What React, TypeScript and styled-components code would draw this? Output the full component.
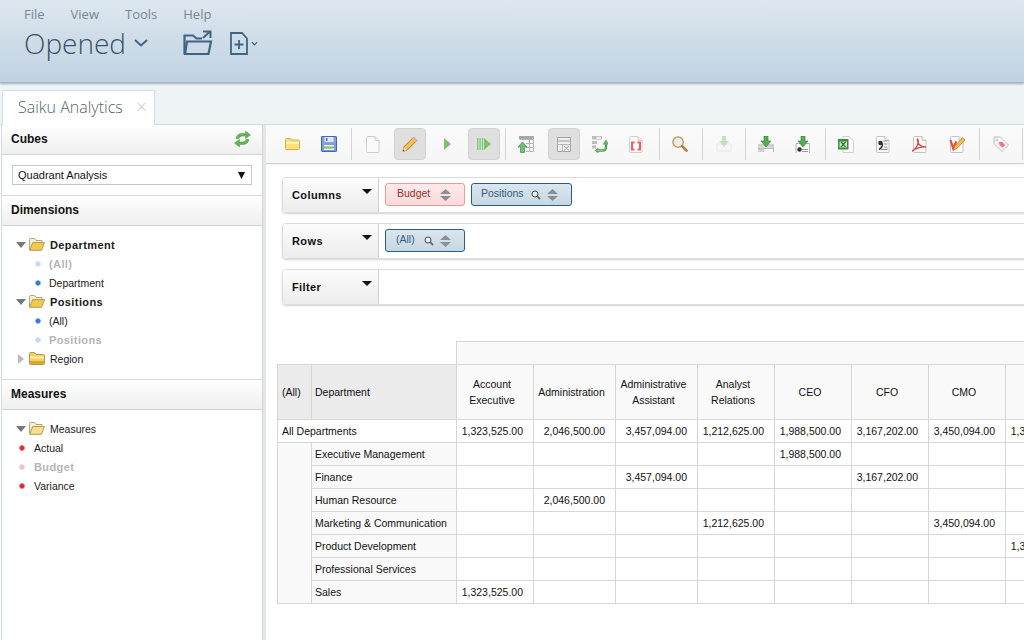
import React from 'react';
import styled, { createGlobalStyle } from 'styled-components';

const GlobalStyle = createGlobalStyle`
  html, body { margin: 0; padding: 0; background: #fff; }
  body { font-family: "Liberation Sans", Arial, sans-serif; font-size: 11px; color: #222; }
`;

const Page = styled.div`
  width: 1024px;
  height: 640px;
  overflow: hidden;
  display: flex;
  flex-direction: column;
`;

const Header = styled.header`
  height: 83px;
  flex: none;
  box-sizing: border-box;
  padding: 5px 0 0 24px;
  background: linear-gradient(to bottom, #dde7ef, #c0d2e2);
  border-bottom: 1px solid #a9b5bf;
  box-shadow: 0 1px 2px rgba(90, 110, 125, 0.5);
  position: relative;
  z-index: 2;
`;

const MenuBar = styled.nav`
  display: flex;
  gap: 26px;
  font: 13px/18px "Open Sans", sans-serif;
  color: #7b8791;
`;

const HeaderTools = styled.div`
  display: flex;
  align-items: center;
  height: 40px;
`;

const Perspective = styled.div`
  font: 300 28px/40px "Open Sans", sans-serif;
  color: #3b5266;
  width: 110px;
`;

const HeaderIcon = styled.svg<{ $ml: number }>`
  margin-left: ${({ $ml }) => $ml}px;
  flex: none;
  overflow: visible;
`;

const TabBar = styled.div`
  height: 42px;
  flex: none;
  box-sizing: border-box;
  padding: 7px 0 0 2px;
  background: #eef3f6;
  border-bottom: 1px solid #cfdbe3;
  display: flex;
  align-items: flex-end;
`;

const Tab = styled.div`
  width: 153px;
  height: 35px;
  box-sizing: border-box;
  margin-bottom: -1px;
  background: #fff;
  border: 1px solid #d3e0e8;
  border-bottom: none;
  padding: 0 0 2px 15px;
  display: flex;
  align-items: center;
  font: 300 16px "Open Sans", sans-serif;
  color: #56646f;
`;

const TabClose = styled.span`
  margin-left: 13px;
  font: 300 20px/20px "Open Sans", sans-serif;
  color: #c3d0d9;
`;

const Body = styled.div`
  flex: 1;
  min-height: 0;
  display: flex;
`;

const SidePanel = styled.aside`
  width: 260px;
  margin-left: 1px;
  flex: none;
  box-sizing: content-box;
  border-left: 1px solid #d3dbe0;
  border-right: 1px solid #cfd6db;
`;

const Splitter = styled.div`
  width: 3px;
  flex: none;
  background: #e6e6e6;
`;

const SectionHeader = styled.div`
  height: 30px;
  box-sizing: border-box;
  padding: 0 11px 2px 9px;
  display: flex;
  align-items: center;
  justify-content: space-between;
  font-weight: bold;
  font-size: 12px;
  color: #111;
  background: linear-gradient(to bottom, #fff, #efefef);
  border-bottom: 1px solid #d0d5d9;
`;

const SectionBody = styled.div`
  border-bottom: 1px solid #d3dbe0;
`;

const CubeArea = styled(SectionBody)`
  height: 41px;
  box-sizing: border-box;
  padding: 10px 10px 0 10px;
`;

const CubeSelect = styled.div`
  height: 20px;
  box-sizing: border-box;
  border: 1px solid #c8c8c8;
  padding: 0 6px 0 5px;
  display: flex;
  align-items: center;
  justify-content: space-between;
  color: #111;
`;

const Tree = styled.ul<{ $h: number }>`
  list-style: none;
  margin: 0;
  padding: 9px 0 0 0;
  height: ${({ $h }) => $h}px;
  box-sizing: border-box;
`;

const TreeRow = styled.li<{ $indent: number; $bold?: boolean; $muted?: boolean }>`
  height: 19px;
  display: flex;
  align-items: center;
  padding-left: ${({ $indent }) => $indent}px;
  font-size: ${({ $bold, $muted }) => ($bold || $muted ? '11px' : '10.5px')};
  font-weight: ${({ $bold, $muted }) => ($bold || $muted ? 'bold' : 'normal')};
  color: ${({ $muted }) => ($muted ? '#b5b5b5' : '#1a1a1a')};
  letter-spacing: ${({ $bold, $muted }) => ($bold || $muted ? '0.4px' : '0')};
`;

const Arrow = styled.span<{ $open: boolean }>`
  width: 0;
  height: 0;
  margin-right: ${({ $open }) => ($open ? 3 : 5)}px;
  border-style: solid;
  ${({ $open }) =>
    $open
      ? 'border-width: 6px 5px 0 5px; border-color: #777 transparent transparent transparent;'
      : 'margin-left: 2px; border-width: 5px 0 5px 6px; border-color: transparent transparent transparent #bbb;'}
`;

const Dot = styled.span<{ $tone: 'blue' | 'red'; $faded?: boolean; $gap: number }>`
  width: 6px;
  height: 6px;
  flex: none;
  border-radius: 50%;
  margin-right: ${({ $gap }) => $gap}px;
  opacity: ${({ $faded }) => ($faded ? 0.3 : 1)};
  background: ${({ $tone }) =>
    $tone === 'blue'
      ? 'radial-gradient(closest-side, #2f78dc 55%, #86b2ea 85%, #c2d7f2 100%)'
      : 'radial-gradient(closest-side, #dd2b35 55%, #e8797f 85%, #f0b8bb 100%)'};
`;

const Main = styled.main`
  flex: 1;
  min-width: 0;
  overflow: hidden;
`;

const Toolbar = styled.div`
  height: 39px;
  box-sizing: border-box;
  padding: 3px 0 0 5px;
  display: flex;
  background: linear-gradient(to bottom, #fbfbfb, #f6f6f6);
  border-bottom: 1px solid #cfcfcf;
  box-shadow: 0 1px 2px rgba(0, 0, 0, 0.06);
  white-space: nowrap;
`;

const ToolGroup = styled.div<{ $first?: boolean }>`
  height: 32px;
  flex: none;
  display: flex;
  gap: 5px;
  padding: 0 ${({ $first }) => ($first ? 6 : 5)}px 0 5px;
  border-right: 1px solid #d4d4d4;
`;

const ToolButton = styled.div<{ $active?: boolean; $faded?: boolean; $nudge?: number }>`
  width: 32px;
  height: 32px;
  flex: none;
  box-sizing: border-box;
  display: flex;
  align-items: center;
  justify-content: center;
  border-radius: 4px;
  background: ${({ $active }) => ($active ? '#dfdfdf' : 'transparent')};
  border: 1px solid ${({ $active }) => ($active ? '#d2d2d2' : 'transparent')};
  & > svg {
    opacity: ${({ $faded }) => ($faded ? 0.35 : 1)};
    margin-right: ${({ $nudge }) => ($nudge ?? 0) * 2}px;
  }
`;

const Fields = styled.section`
  padding: 13px 0 0 16px;
  display: flex;
  flex-direction: column;
  gap: 10px;
`;

const FieldRow = styled.div`
  height: 36px;
  box-sizing: border-box;
  width: 800px;
  display: flex;
  border: 1px solid #dcdcdc;
  border-radius: 4px 0 0 4px;
  box-shadow: 0 1px 2px rgba(0, 0, 0, 0.18);
`;

const FieldLabel = styled.div`
  width: 96px;
  flex: none;
  box-sizing: border-box;
  position: relative;
  padding-left: 9px;
  display: flex;
  align-items: center;
  font-weight: bold;
  letter-spacing: 0.4px;
  color: #111;
  border-right: 1px solid #cfcfcf;
  background: linear-gradient(to bottom, #fdfdfd, #ececec);
  border-radius: 4px 0 0 4px;
`;

const FieldCaret = styled.span`
  position: absolute;
  right: 6px;
  top: 11px;
  width: 0;
  height: 0;
  border-style: solid;
  border-width: 5px 5px 0 5px;
  border-color: #111 transparent transparent transparent;
`;

const PillList = styled.div`
  display: flex;
  gap: 6px;
  padding: 5px 0 0 6px;
`;

const Pill = styled.div<{ $tone: 'red' | 'blue'; $w: number; $pad: number }>`
  width: ${({ $w }) => $w}px;
  height: 23px;
  box-sizing: border-box;
  padding: 0 13px 3px ${({ $pad }) => $pad}px;
  display: flex;
  align-items: center;
  border-radius: 3px;
  font-size: 10.5px;
  border: 1px solid ${({ $tone }) => ($tone === 'red' ? '#ee9a9a' : '#2c5c82')};
  color: ${({ $tone }) => ($tone === 'red' ? '#a02c2c' : '#2f5d80')};
  background: ${({ $tone }) =>
    $tone === 'red'
      ? 'linear-gradient(to bottom, #fdeaea, #fbdada)'
      : 'linear-gradient(to bottom, #dbe6ee, #c6d7e4)'};
`;

const PillIcons = styled.span`
  display: flex;
  align-items: center;
  gap: 6px;
  margin: 3px 0 0 auto;
`;

const TableWrap = styled.div`
  margin: 36px 0 0 11px;
`;

const Pivot = styled.table`
  border-collapse: collapse;
  table-layout: fixed;
  width: 805px;
  font-size: 10.5px;
  color: #111;
  & td, & th {
    font-weight: normal;
    border: 1px solid #d6d6d6;
    box-sizing: border-box;
    padding: 0;
    height: 23px;
    white-space: nowrap;
    overflow: hidden;
  }
`;

const BlankCell = styled.th`
  && { border: none; border-bottom: 1px solid #d6d6d6; }
`;

const ColumnSpacer = styled.th`
  && { background: #f9f9f9; }
`;

const AxisHead = styled.th<{ $pad: number }>`
  && {
    height: 55px;
    background: #ebebeb;
    text-align: left;
    padding-left: ${({ $pad }) => $pad}px;
  }
`;

const ColumnHead = styled.th`
  && {
    height: 55px;
    background: #f9f9f9;
    text-align: center;
    line-height: 16px;
    white-space: normal;
    padding-right: 6px;
  }
`;

const RowHead = styled.th<{ $pad: number; $plain?: boolean }>`
  && {
    text-align: left;
    padding-left: ${({ $pad }) => $pad}px;
    background: ${({ $plain }) => ($plain ? '#fff' : '#f9f9f9')};
  }
`;

const Cell = styled.td`
  && {
    text-align: right;
    padding-right: 10px;
    background: #fff;
  }
`;

const FolderClosed = () => (
  <svg width="16" height="13" viewBox="0 0 16 13" style={{ marginRight: 5 }}>
    <path d="M.5 11.500v-10q0-1 1-1h4l1.500 2h7.500q1 0 1 1v8q0 1-1 1h-13q-1 0-1-1z" fill="#f3cf5c" stroke="#b3985a" />
    <path d="M1 4.500h14v2H1z" fill="#fdf0b4" />
    <path d="M1 9h14v3H1z" fill="#d9a832" />
  </svg>
);

const FolderOpen = ({ pale }: { pale?: boolean }) => (
  <svg width="16" height="13" viewBox="0 0 16 13" style={{ marginRight: 5 }}>
    <path d="M.5 12V1.500q0-1 1-1h4l1.500 2h6v2" fill="#f7f0d3" stroke="#b3a67c" />
    <path d="M.8 12.300 3.600 4.600h11.900l-3 7.700z" fill={pale ? '#f7df8e' : '#f2c94c'} stroke="#b09a5a" />
  </svg>
);

const MagnifierSmall = () => (
  <svg width="10" height="10" viewBox="0 0 10 10">
    <circle cx="4" cy="4" r="3" fill="#e8eef2" stroke="#444" />
    <path d="M6.200 6.200 9 9" stroke="#666" strokeWidth="1.800" />
  </svg>
);

const SortArrows = () => (
  <svg width="11" height="12" viewBox="0 0 11 12">
    <path d="M5.500 0l5.500 5H0zM5.500 12l5.500-5H0z" fill="#8a8f93" />
  </svg>
);

const DocBase = ({ children, stroke = '#c4c4c4' }: { children?: React.ReactNode; stroke?: string }) => (
  <svg width="16" height="17" viewBox="0 0 16 17">
    <path d="M2.500.5h7.500l4 4v11q0 1-1 1h-10.500q-1 0-1-1v-14q0-1 1-1z" fill="#fbfbfb" stroke={stroke} />
    <path d="M10 .5v4h4" fill="#eee" stroke={stroke} />
    {children}
  </svg>
);

const GridBase = ({ children }: { children?: React.ReactNode }) => (
  <svg width="16" height="17" viewBox="0 0 16 17">
    {children}
  </svg>
);

const icons = {
  folder: (
    <svg width="15" height="12" viewBox="0 0 15 12">
      <path d="M.5 10.500v-9q0-1 1-1h4l1 1.500h7q1 0 1 1v7.500q0 1-1 1h-12q-1 0-1-1z" fill="#fbe27f" stroke="#e5a73a" />
      <path d="M1 4h13v2H1z" fill="#fff3b8" />
    </svg>
  ),
  save: (
    <svg width="16" height="16" viewBox="0 0 16 16">
      <path d="M1 .5h14q.5 0 .5.5v14q0 .5-.5.5H1q-.5 0-.5-.5V1Q.5.5 1 .5z" fill="#7f9fdc" stroke="#3f68b5" />
      <path d="M3.500 1h9v5h-9z" fill="#dfe7f5" />
      <path d="M5 2h1.500v3H5z" fill="#4a6fb8" />
      <path d="M3 9h10v5H3z" fill="#eef3ea" />
      <path d="M3 10.500h10v2H3z" fill="#83bf63" />
    </svg>
  ),
  page: <DocBase stroke="#cdcdcd" />,
  pencil: (
    <svg width="16" height="16" viewBox="0 0 16 16">
      <path d="M11.500 1.200 14.800 4.500 5 14.300 1 15.200 1.800 11z" fill="#f6c14b" stroke="#b0762a" />
      <path d="M11.500 1.200 14.800 4.500 13.300 6 10 2.700z" fill="#efb0a0" />
      <path d="M1.800 11 1 15.200 5 14.300z" fill="#f3dcb4" />
      <path d="M1 15.200 1.300 13.500 2.700 14.900z" fill="#555" />
    </svg>
  ),
  play: (
    <svg width="7" height="12" viewBox="0 0 7 12">
      <path d="M0 0l7 6-7 6z" fill="#7cc06f" />
    </svg>
  ),
  playAll: (
    <svg width="14" height="12" viewBox="0 0 14 12">
      <path d="M0 0h1.400v12H0zM2.400 0h1.400v12H2.400zM4.800 0h1.400v12H4.800z" fill="#84c978" />
      <path d="M7 0 14 6 7 12z" fill="#7cc06f" />
    </svg>
  ),
  tableUp: (
    <GridBase>
      <path d="M1 0h15v3H1z" fill="#a8a8a8" />
      <path d="M1.500 3.500h14V15.500H8M8 7.500h7.500M8 11.500h7.500M11.500 3.500v12" fill="none" stroke="#b5b5b5" />
      <path d="M4.500 6 9 11H6.500v5.500h-4V11H0z" fill="#74bd74" stroke="#3f8a47" strokeWidth=".7" />
    </GridBase>
  ),
  tableHide: (
    <svg width="14" height="15" viewBox="0 0 14 15">
      <path d="M.5.500h13v14H.5z" fill="#efefef" stroke="#a5a5a5" />
      <path d="M1 3h12v2H1z" fill="#c4c4c4" />
      <path d="M.5 7.500h13M5.500 7.500v7" stroke="#b5b5b5" fill="none" />
      <path d="M7 9l5 4.500M12 9l-5 4.500" stroke="#aaa" fill="none" />
    </svg>
  ),
  swap: (
    <GridBase>
      <path d="M0 0h10v3.500H0zM0 5h5v3H0zM0 9.500h4v3H0z" fill="#bdbdbd" />
      <path d="M4.500 .8h4.500v2H4.500z" fill="#eef4fa" />
      <path d="M4 14.500h6.500q3.500 0 3.500-3.500V8" fill="none" stroke="#4f9f52" strokeWidth="2.400" />
      <path d="M10.500 8.500 14 3.500 17 8.500z" fill="#5fb060" />
      <path d="M6.500 11.500v6L2.500 14.500z" fill="#5fb060" />
      <path d="M4.500 14.500h6q3 0 3-3" fill="none" stroke="#9bd39b" strokeWidth=".7" />
    </GridBase>
  ),
  mdx: (
    <DocBase stroke="#cfcfcf">
      <path d="M6.500 6.500H4v7h2.500M9.500 6.500H12v7H9.500" fill="none" stroke="#f25f5f" strokeWidth="2" />
    </DocBase>
  ),
  search: (
    <svg width="16" height="16" viewBox="0 0 17 17">
      <circle cx="6.500" cy="6.500" r="5.500" fill="#e9f0f5" stroke="#cc9a5a" strokeWidth="1.600" />
      <path d="M10.800 10.800 15.500 15.500" stroke="#b37a3c" strokeWidth="2.800" strokeLinecap="round" />
    </svg>
  ),
  dropFaded: (
    <GridBase>
      <path d="M1 8h14v7H1z" fill="#f4f4f4" stroke="#ccc" />
      <path d="M6 0h4v5h3l-5 6-5-6h3z" fill="#64b060" />
    </GridBase>
  ),
  dropTable: (
    <GridBase>
      <path d="M.5 8v8M15.500 8v8M0 12.500h16" fill="none" stroke="#b8b8b8" />
      <path d="M0 8h16v3.500H0zM0 13h6v3H0z" fill="#cfcfcf" />
      <path d="M6 0h4v5h3l-5 6-5-6h3z" fill="#55ad55" stroke="#2e7d34" strokeWidth=".6" />
    </GridBase>
  ),
  dropDoc: (
    <GridBase>
      <path d="M1 17V7.500h13.500V17" fill="#f7f7f7" stroke="#b5b5b5" />
      <path d="M7 13.500h6M7 15.500h6" stroke="#999" />
      <circle cx="4.500" cy="13.500" r="2.200" fill="#333" />
      <path d="M6 0h4v5h3l-5 6-5-6h3z" fill="#55ad55" stroke="#2e7d34" strokeWidth=".6" />
    </GridBase>
  ),
  excel: (
    <svg width="16" height="17" viewBox="0 0 16 17">
      <path d="M5 .5h6l4.500 4.500v11.500H5z" fill="#fbfbfb" stroke="#cfcfcf" />
      <path d="M0 3h10.500v10.500H0z" fill="#3d8c3f" />
      <path d="M1.500 5.500h7.500v6H1.500z" fill="#cfe4ca" />
      <path d="M3 6l4.500 5M7.500 6L3 11" stroke="#2f7a33" strokeWidth="1.200" />
    </svg>
  ),
  csv: (
    <DocBase>
      <circle cx="5.500" cy="7" r="2.300" fill="#333" />
      <path d="M7.500 7.500q0 4-3.500 6" stroke="#333" strokeWidth="1.500" fill="none" />
      <path d="M8.500 5h4M9 8h3.500M9 11h3.500M6 13.500h6.500" stroke="#888" />
    </DocBase>
  ),
  pdf: (
    <DocBase>
      <path d="M-.5 15.500C4 13 7 8 6 3.500c-.5-1.500-1 1 0 3 1 2.500 4 4.500 8 4.500-3-.5-10 .5-14.500 4.500z" fill="none" stroke="#dc4046" strokeWidth="1.300" />
    </DocBase>
  ),
  report: (
    <DocBase>
      <path d="M1.500 4l2.700 8.500 3-7" fill="none" stroke="#ea4a4f" strokeWidth="2.200" />
      <path d="M13.500 1.500 16 4 8 12.500l-3.500 1.500 1-3.500z" fill="#f1bf4b" stroke="#a87427" strokeWidth=".7" />
    </DocBase>
  ),
  tag: (
    <svg width="16" height="16" viewBox="0 0 16 16">
      <path d="M1 1h6.500l8 8-6.500 6.500-8-8z" fill="#f7f7f7" stroke="#bdbdbd" />
      <path d="M5.800 6 9.300 6l3 3-2.800 2.800-3.200-3z" fill="#f4777f" />
      <circle cx="3.800" cy="3.800" r="1" fill="#fff" stroke="#aaa" strokeWidth=".6" />
    </svg>
  ),
};

type ToolKey = keyof typeof icons;
type Tool = { icon: ToolKey; active?: boolean; faded?: boolean; nudge?: number };

const toolGroups: Tool[][] = [
  [{ icon: 'folder' }, { icon: 'save' }],
  [{ icon: 'page' }, { icon: 'pencil', active: true }, { icon: 'play' }, { icon: 'playAll', active: true }],
  [{ icon: 'tableUp', nudge: 1 }, { icon: 'tableHide', active: true }, { icon: 'swap', nudge: 1 }, { icon: 'mdx', nudge: 2 }],
  [{ icon: 'search', nudge: 1 }],
  [{ icon: 'dropFaded', faded: true }],
  [{ icon: 'dropTable', nudge: 1 }, { icon: 'dropDoc', nudge: 1 }],
  [{ icon: 'excel', nudge: 1 }, { icon: 'csv', nudge: 1 }, { icon: 'pdf', nudge: 1 }, { icon: 'report', nudge: 1 }],
  [{ icon: 'tag' }],
];

const columnHeads = [
  ['Account', 'Executive'],
  ['Administration'],
  ['Administrative', 'Assistant'],
  ['Analyst', 'Relations'],
  ['CEO'],
  ['CFO'],
  ['CMO'],
  ['COO'],
];

const columnWidths = [34, 145, 77, 82, 82, 77, 77, 77, 77, 77];

const rows: { name: string; col: number; value: string }[] = [
  { name: 'Executive Management', col: 4, value: '1,988,500.00' },
  { name: 'Finance', col: 2, value: '3,457,094.00' },
  { name: 'Finance', col: 5, value: '3,167,202.00' },
  { name: 'Human Resource', col: 1, value: '2,046,500.00' },
  { name: 'Marketing & Communication', col: 3, value: '1,212,625.00' },
  { name: 'Marketing & Communication', col: 6, value: '3,450,094.00' },
  { name: 'Product Development', col: 7, value: '1,345,125.00' },
  { name: 'Professional Services', col: -1, value: '' },
  { name: 'Sales', col: 0, value: '1,323,525.00' },
];

const rowNames = Array.from(new Set(rows.map((r) => r.name)));
const totals = ['1,323,525.00', '2,046,500.00', '3,457,094.00', '1,212,625.00', '1,988,500.00', '3,167,202.00', '3,450,094.00', '1,345,125.00'];

const App = () => (
  <Page>
    <GlobalStyle />
    <Header>
      <MenuBar>
        <span>File</span>
        <span>View</span>
        <span>Tools</span>
        <span>Help</span>
      </MenuBar>
      <HeaderTools>
        <Perspective>Opened</Perspective>
        <svg width="14" height="8" viewBox="0 0 14 8" style={{ flex: 'none' }}>
          <path d="M1 1l6 5.500L13 1" fill="none" stroke="#3f6585" strokeWidth="2" />
        </svg>
        <HeaderIcon $ml={35} width="29" height="26" viewBox="0 0 29 26" fill="none" stroke="#3f6585" strokeWidth="2.200">
          <path d="M1.500 24V5.500h8.500l3.500 3h5.500" />
          <path d="M4 11.500h24L25.500 24h-23.500z" />
          <path d="M20 8l7-6.500M20 1.500h7.500V8" strokeWidth="2" />
        </HeaderIcon>
        <HeaderIcon $ml={18} width="18" height="23" viewBox="0 0 18 23" fill="none" stroke="#3f6585" strokeWidth="1.800">
          <path d="M1 1h11l5 5.500V22H1z" />
          <path d="M9 8v9M4.500 12.500h9" />
        </HeaderIcon>
        <HeaderIcon $ml={3} width="7" height="5" viewBox="0 0 8 5" fill="none" stroke="#3f6585" strokeWidth="1.400">
          <path d="M1 1l3 3 3-3" />
        </HeaderIcon>
      </HeaderTools>
    </Header>
    <TabBar>
      <Tab>
        Saiku Analytics
        <TabClose>×</TabClose>
      </Tab>
    </TabBar>
    <Body>
      <SidePanel>
        <SectionHeader>
          Cubes
          <svg width="17" height="16" viewBox="0 0 17 16">
            <path d="M2 7.500Q3 2.500 8.500 2.500h3V0l5 4-5 3.500V5h-3Q5.500 5 5 7.500z" fill="#67b357" stroke="#4a9440" strokeWidth=".5" />
            <path d="M15 8.500Q14 13.500 8.500 13.500h-3V16l-5-4 5-3.500V11h3q3 0 3.500-2.500z" fill="#67b357" stroke="#4a9440" strokeWidth=".5" />
          </svg>
        </SectionHeader>
        <CubeArea>
          <CubeSelect>
            Quadrant Analysis
            <svg width="7" height="7" viewBox="0 0 7 7"><path d="M0 0h7L3.500 7z" fill="#111" /></svg>
          </CubeSelect>
        </CubeArea>
        <SectionHeader>Dimensions</SectionHeader>
        <SectionBody>
          <Tree $h={153}>
            <TreeRow $indent={14} $bold><Arrow $open /><FolderOpen />Department</TreeRow>
            <TreeRow $indent={33} $muted><Dot $tone="blue" $faded $gap={8} />(All)</TreeRow>
            <TreeRow $indent={33}><Dot $tone="blue" $gap={8} />Department</TreeRow>
            <TreeRow $indent={14} $bold><Arrow $open /><FolderOpen />Positions</TreeRow>
            <TreeRow $indent={33}><Dot $tone="blue" $gap={8} />(All)</TreeRow>
            <TreeRow $indent={33} $muted><Dot $tone="blue" $faded $gap={8} />Positions</TreeRow>
            <TreeRow $indent={14}><Arrow $open={false} /><FolderClosed />Region</TreeRow>
          </Tree>
        </SectionBody>
        <SectionHeader>Measures</SectionHeader>
        <Tree $h={100}>
          <TreeRow $indent={14}><Arrow $open /><FolderOpen pale />Measures</TreeRow>
          <TreeRow $indent={17}><Dot $tone="red" $gap={9} />Actual</TreeRow>
          <TreeRow $indent={17} $muted><Dot $tone="red" $faded $gap={9} />Budget</TreeRow>
          <TreeRow $indent={17}><Dot $tone="red" $gap={9} />Variance</TreeRow>
        </Tree>
      </SidePanel>
      <Splitter />
      <Main>
        <Toolbar>
          {toolGroups.map((group, g) => (
            <ToolGroup key={g} $first={g === 0}>
              {group.map((tool) => (
                <ToolButton key={tool.icon} $active={tool.active} $faded={tool.faded} $nudge={tool.nudge}>
                  {icons[tool.icon]}
                </ToolButton>
              ))}
            </ToolGroup>
          ))}
        </Toolbar>
        <Fields>
          <FieldRow>
            <FieldLabel>Columns<FieldCaret /></FieldLabel>
            <PillList>
              <Pill $tone="red" $w={80} $pad={11}>Budget<PillIcons><SortArrows /></PillIcons></Pill>
              <Pill $tone="blue" $w={101} $pad={9}>Positions<PillIcons><MagnifierSmall /><SortArrows /></PillIcons></Pill>
            </PillList>
          </FieldRow>
          <FieldRow>
            <FieldLabel>Rows<FieldCaret /></FieldLabel>
            <PillList>
              <Pill $tone="blue" $w={80} $pad={10}>(All)<PillIcons><MagnifierSmall /><SortArrows /></PillIcons></Pill>
            </PillList>
          </FieldRow>
          <FieldRow>
            <FieldLabel>Filter<FieldCaret /></FieldLabel>
          </FieldRow>
        </Fields>
        <TableWrap>
          <Pivot>
            <colgroup>
              {columnWidths.map((w, i) => <col key={i} width={w} />)}
            </colgroup>
            <thead>
              <tr>
                <BlankCell colSpan={2} />
                <ColumnSpacer colSpan={8} />
              </tr>
              <tr>
                <AxisHead $pad={4}>(All)</AxisHead>
                <AxisHead $pad={3}>Department</AxisHead>
                {columnHeads.map((lines) => (
                  <ColumnHead key={lines[0]}>
                    {lines.map((line, i) => (
                      <React.Fragment key={line}>{i > 0 && <br />}{line}</React.Fragment>
                    ))}
                  </ColumnHead>
                ))}
              </tr>
            </thead>
            <tbody>
              <tr>
                <RowHead colSpan={2} $pad={4} $plain>All Departments</RowHead>
                {totals.map((t) => <Cell key={t}>{t}</Cell>)}
              </tr>
              {rowNames.map((name, r) => (
                <tr key={name}>
                  {r === 0 && <RowHead rowSpan={rowNames.length} $pad={0} />}
                  <RowHead $pad={3}>{name}</RowHead>
                  {columnHeads.map((_, c) => (
                    <Cell key={c}>{rows.find((x) => x.name === name && x.col === c)?.value}</Cell>
                  ))}
                </tr>
              ))}
            </tbody>
          </Pivot>
        </TableWrap>
      </Main>
    </Body>
  </Page>
);

export default App;
